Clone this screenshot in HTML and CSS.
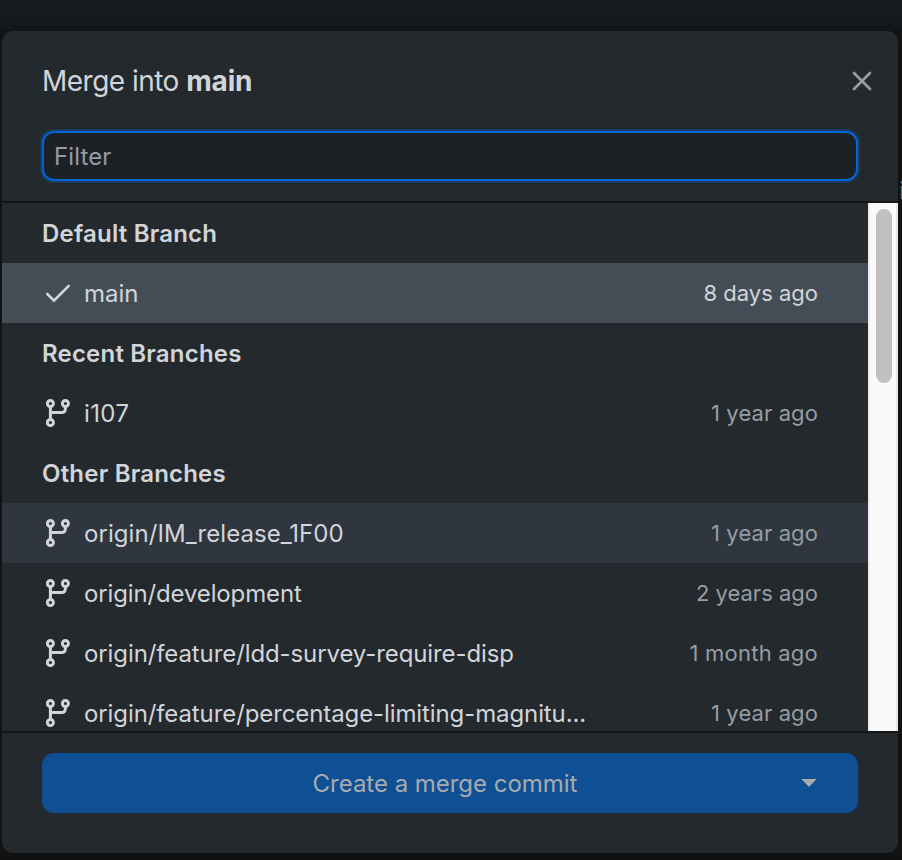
FILE: index.html
```html
<!DOCTYPE html>
<html lang="en">
<head>
<meta charset="utf-8">
<title>Merge into main</title>
<link rel="stylesheet" href="styles.css">
</head>
<body>
<svg class="symbols" aria-hidden="true">
  <symbol id="branch" viewBox="0 0 24 28">
    <g fill="none" stroke="currentColor" stroke-width="3">
      <circle cx="4.4" cy="4.5" r="3"/>
      <circle cx="19.4" cy="4.5" r="3"/>
      <circle cx="4.4" cy="23.5" r="3"/>
      <path d="M4.4 7.5v13M4.4 13.6h10.8q4.2 0 4.2-4.2V7.5"/>
    </g>
  </symbol>
</svg>
<span class="behind">i</span>
<main class="dialog">
  <header class="header">
    <div class="title-row">
      <h1 class="title">Merge into <strong>main</strong></h1>
      <svg class="close" viewBox="0 0 20 20"><path d="M2 2l16 16M18 2L2 18"/></svg>
    </div>
    <input class="filter" type="text" placeholder="Filter">
  </header>
  <section class="list">
    <div class="rows">
      <h2 class="group">Default Branch</h2>
      <div class="row selected"><svg class="icon check" viewBox="0 0 24 28"><path d="M1.3 15l6.7 6.6L22.7 6.9"/></svg><span class="name">main</span><span class="time">8 days ago</span></div>
      <h2 class="group">Recent Branches</h2>
      <div class="row"><svg class="icon"><use href="#branch"/></svg><span class="name n-i107">i107</span><span class="time t-year">1 year ago</span></div>
      <h2 class="group">Other Branches</h2>
      <div class="row hover"><svg class="icon"><use href="#branch"/></svg><span class="name n-release">origin/IM_release_1F00</span><span class="time t-year">1 year ago</span></div>
      <div class="row"><svg class="icon"><use href="#branch"/></svg><span class="name n-dev">origin/development</span><span class="time">2 years ago</span></div>
      <div class="row"><svg class="icon"><use href="#branch"/></svg><span class="name n-long">origin/feature/ldd-survey-require-disp</span><span class="time t-month">1 month ago</span></div>
      <div class="row"><svg class="icon"><use href="#branch"/></svg><span class="name n-long">origin/feature/percentage-limiting-magnitu...</span><span class="time t-year">1 year ago</span></div>
    </div>
    <div class="track"><div class="thumb"></div></div>
  </section>
  <footer class="footer">
    <button class="merge" disabled><span class="label">Create a merge commit</span><svg class="caret" viewBox="0 0 16 8"><path d="M.5 0h15L8 8z"/></svg></button>
  </footer>
</main>
</body>
</html>
```

FILE: styles.css
```css
* { box-sizing: border-box; }
body {
  margin: 0;
  height: 860px;
  padding: 31px 4px 7px 2px;
  overflow: hidden;
  background: linear-gradient(#171c1f, #15191c 24px, #141414 34px, #141414 852px, #101113);
  font-family: Inter, "Liberation Sans", sans-serif;
  font-size: 24px;
  color: #d1d5da;
}
h1, h2 { margin: 0; }
.symbols { position: absolute; width: 0; height: 0; }
.behind { position: absolute; left: 899px; top: 176px; color: #777; line-height: 29px; }
.dialog {
  height: 822px;
  border-radius: 11px;
  background: #24292d;
  box-shadow: 0 0 5px #111;
  display: flex;
  flex-direction: column;
  overflow: hidden;
  position: relative;
}
.header { height: 172px; padding: 30px 40px 0; border-bottom: 2px solid #141414; }
.title-row { height: 40px; display: flex; align-items: center; justify-content: space-between; }
.title { font-size: 28px; font-weight: 400; line-height: 40px; letter-spacing: -.52px; white-space: nowrap; }
.title strong { font-weight: 700; letter-spacing: -.2px; }
.close { width: 20px; height: 20px; margin-right: -14px; fill: none; stroke: #959da5; stroke-width: 2.7; stroke-linecap: round; }
.filter {
  display: block;
  width: 100%;
  height: 50px;
  margin-top: 30px;
  padding: 0 10px;
  border: 2px solid #0366d6;
  border-radius: 12px;
  background: #1d2125;
  box-shadow: 0 0 0 2px #1b3b5c;
  outline: 0;
  font: inherit;
  letter-spacing: .1px;
  color: #d1d5da;
}
.filter::placeholder { color: #959da5; opacity: 1; }
.list { height: 528px; display: flex; overflow: hidden; }
.rows { width: 866px; flex: none; }
.group { height: 60px; padding-left: 40px; font-size: 24px; font-weight: 600; line-height: 62px; letter-spacing: .2px; white-space: nowrap; }
.row { height: 60px; padding: 0 50px 0 44px; display: flex; align-items: center; white-space: nowrap; }
.selected { background: #444d56; }
.hover { background: #2f363f; }
.icon { width: 24px; height: 28px; margin-right: 14px; flex: none; }
.check { fill: none; stroke: currentColor; stroke-width: 2.7; stroke-linecap: round; }
.name { height: 60px; line-height: 62px; }
.n-i107 { letter-spacing: .4px; }
.n-release { letter-spacing: .07px; }
.n-dev { letter-spacing: -.14px; }
.n-long { letter-spacing: -.1px; }
.time { margin-left: auto; font-size: 22px; line-height: 60px; color: #959da5; }
.t-year { letter-spacing: .1px; }
.t-month { letter-spacing: .22px; }
.selected .time { color: #d1d5da; }
.track { flex: 1; background: #fafafa; border-left: 2px solid #ededed; border-right: 2px solid #e9e9e9; padding: 6px 4px 0 6px; }
.thumb { width: 16px; height: 174px; border-radius: 8px; background: #c1c1c1; }
.footer { flex: 1; border-top: 2px solid #141414; padding: 20px 40px; }
.merge {
  width: 100%;
  height: 60px;
  padding: 0 41px 0 0;
  border: 0;
  border-radius: 12px;
  background: #0f4f93;
  color: #a8abae;
  font: inherit;
  display: flex;
  align-items: center;
}
.label { flex: 1; padding-left: 47px; text-align: center; letter-spacing: -.03px; }
.caret { width: 16px; height: 8px; fill: #acacac; }
```
